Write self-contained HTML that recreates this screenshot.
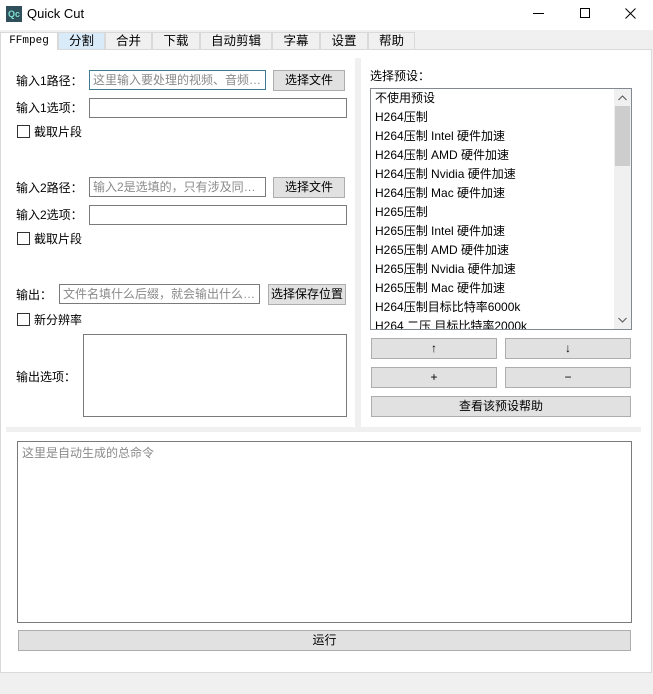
<!DOCTYPE html><html><head><meta charset="utf-8"><style>
*{box-sizing:border-box;margin:0;padding:0}
body{width:653px;height:694px;background:#f0f0f0;font-family:"Liberation Sans","Noto Sans CJK SC",sans-serif;font-size:12px;color:#000;position:relative;overflow:hidden}
.a{position:absolute}
.in{position:absolute;background:#fff;border:1px solid #7a7a7a;color:#8a8a8a;padding:1px 3px;line-height:16px;white-space:nowrap;overflow:hidden}
.bt{position:absolute;background:#e1e1e1;border:1px solid #adadad;text-align:center;line-height:18px}
.cb{position:absolute;width:13px;height:13px;border:1px solid #333;background:#fff}
.tab{position:absolute;top:32px;height:17px;border:1px solid #d9d9d9;border-bottom:none;background:#f0f0f0;text-align:center;line-height:16px;font-size:12.5px}
.li{height:19px;line-height:19px;padding-left:4px;white-space:nowrap}
</style></head><body>
<div class="a" style="left:0;top:0;width:653px;height:30px;background:#fff"></div>
<div class="a" style="left:6px;top:6px;width:16px;height:16px;background:#2f4f5a;color:#7fe0d0;font-size:9px;font-weight:bold;line-height:16px;text-align:center">Qc</div>
<div class="a" style="left:27px;top:6px;font-size:13px">Quick Cut</div>
<div class="a" style="left:533px;top:13px;width:11px;height:1px;background:#000"></div>
<div class="a" style="left:580px;top:8px;width:10px;height:10px;border:1px solid #000"></div>
<svg class="a" style="left:625px;top:8px" width="11" height="11"><path d="M0.5 0.5L10.5 10.5M10.5 0.5L0.5 10.5" stroke="#000" stroke-width="1"/></svg>
<div class="a" style="left:0;top:49px;width:652px;height:624px;background:#fff;border:1px solid #d9d9d9"></div>
<div class="tab" style="left:0;width:58px;background:#fff;font-family:'Liberation Mono',monospace;font-size:11px;height:18px">FFmpeg</div>
<div class="tab" style="left:58px;width:47px;background:#d9ebf9">分割</div>
<div class="tab" style="left:105px;width:47px">合并</div>
<div class="tab" style="left:152px;width:48px">下载</div>
<div class="tab" style="left:200px;width:72px">自动剪辑</div>
<div class="tab" style="left:272px;width:48px">字幕</div>
<div class="tab" style="left:320px;width:48px">设置</div>
<div class="tab" style="left:368px;width:47px">帮助</div>
<div class="a" style="left:355px;top:58px;width:6px;height:370px;background:#f0f0f0"></div>
<div class="a" style="left:6px;top:427px;width:635px;height:5px;background:#f0f0f0"></div>

<div class="a" style="left:16px;top:72px">输入1路径：</div>
<div class="in" style="left:89px;top:70px;width:177px;height:20px;border-color:#3c7a90">这里输入要处理的视频、音频…</div>
<div class="bt" style="left:273px;top:70px;width:72px;height:21px">选择文件</div>
<div class="a" style="left:16px;top:99px">输入1选项：</div>
<div class="in" style="left:89px;top:98px;width:258px;height:20px"></div>
<div class="cb" style="left:17px;top:125px"></div><div class="a" style="left:34px;top:123px">截取片段</div>

<div class="a" style="left:16px;top:179px">输入2路径：</div>
<div class="in" style="left:89px;top:177px;width:177px;height:20px">输入2是选填的，只有涉及同…</div>
<div class="bt" style="left:273px;top:177px;width:72px;height:21px">选择文件</div>
<div class="a" style="left:16px;top:206px">输入2选项：</div>
<div class="in" style="left:89px;top:205px;width:258px;height:20px"></div>
<div class="cb" style="left:17px;top:232px"></div><div class="a" style="left:34px;top:230px">截取片段</div>

<div class="a" style="left:16px;top:286px">输出：</div>
<div class="in" style="left:59px;top:284px;width:201px;height:20px">文件名填什么后缀，就会输出什么…</div>
<div class="bt" style="left:268px;top:284px;width:78px;height:21px">选择保存位置</div>
<div class="cb" style="left:17px;top:313px"></div><div class="a" style="left:34px;top:311px">新分辨率</div>
<div class="a" style="left:16px;top:368px">输出选项：</div>
<div class="in" style="left:83px;top:334px;width:264px;height:83px"></div>

<div class="a" style="left:370px;top:67px">选择预设：</div>
<div class="a" style="left:370px;top:88px;width:262px;height:242px;background:#fff;border:1px solid #828790;overflow:hidden">
<div>
<div class="li">不使用预设</div><div class="li">H264压制</div><div class="li">H264压制 Intel 硬件加速</div><div class="li">H264压制 AMD 硬件加速</div><div class="li">H264压制 Nvidia 硬件加速</div><div class="li">H264压制 Mac 硬件加速</div><div class="li">H265压制</div><div class="li">H265压制 Intel 硬件加速</div><div class="li">H265压制 AMD 硬件加速</div><div class="li">H265压制 Nvidia 硬件加速</div><div class="li">H265压制 Mac 硬件加速</div><div class="li">H264压制目标比特率6000k</div><div class="li">H264 二压 目标比特率2000k</div>
</div>
<div class="a" style="right:0;top:0;width:17px;height:240px;background:#f0f0f0"></div>
<div class="a" style="right:1px;top:17px;width:15px;height:60px;background:#cdcdcd"></div>
<svg class="a" style="right:4px;top:6px" width="9" height="6"><path d="M0.5 5L4.5 1L8.5 5" stroke="#555" fill="none"/></svg>
<svg class="a" style="right:4px;bottom:6px" width="9" height="6"><path d="M0.5 1L4.5 5L8.5 1" stroke="#555" fill="none"/></svg>
</div>
<div class="bt" style="left:371px;top:338px;width:126px;height:21px">↑</div>
<div class="bt" style="left:505px;top:338px;width:126px;height:21px">↓</div>
<div class="bt" style="left:371px;top:367px;width:126px;height:21px">+</div>
<div class="bt" style="left:505px;top:367px;width:126px;height:21px">−</div>
<div class="bt" style="left:371px;top:396px;width:260px;height:21px">查看该预设帮助</div>

<div class="in" style="left:17px;top:441px;width:615px;height:182px;padding:3px 4px">这里是自动生成的总命令</div>
<div class="bt" style="left:18px;top:630px;width:613px;height:21px">运行</div>
</body></html>
